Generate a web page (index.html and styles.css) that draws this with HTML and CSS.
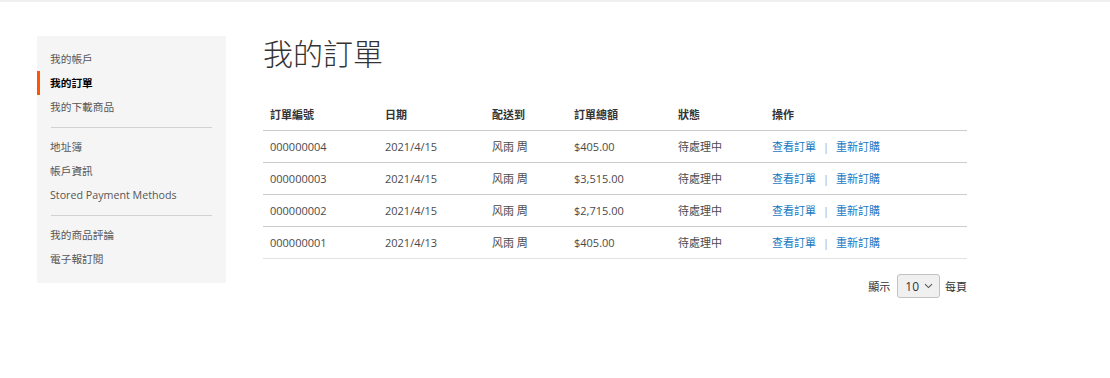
FILE: index.html
```html
<!DOCTYPE html>
<html>
<head>
  <meta charset="UTF-8">
  <title>我的訂單</title>
  <link rel="stylesheet" href="styles.css">
</head>
<body>
  <div class="top-bar"></div>
  <div class="page">
    <div class="sidebar">
      <ul class="nav">
        <li><a href="#">我的帳戶</a></li>
        <li class="current"><strong>我的訂單</strong></li>
        <li><a href="#">我的下載商品</a></li>
        <li class="delim"></li>
        <li><a href="#">地址簿</a></li>
        <li><a href="#">帳戶資訊</a></li>
        <li><a href="#">Stored Payment Methods</a></li>
        <li class="delim"></li>
        <li><a href="#">我的商品評論</a></li>
        <li><a href="#">電子報訂閱</a></li>
      </ul>
    </div>

    <div class="main">
      <h1 class="page-title">我的訂單</h1>
      <table class="orders">
        <thead>
          <tr>
            <th class="col-id">訂單編號</th>
            <th class="col-date">日期</th>
            <th class="col-ship">配送到</th>
            <th class="col-total">訂單總額</th>
            <th class="col-status">狀態</th>
            <th class="col-actions">操作</th>
          </tr>
        </thead>
        <tbody>
          <tr>
            <td>000000004</td><td>2021/4/15</td><td>风雨 周</td><td>$405.00</td><td>待處理中</td>
            <td><a href="#">查看訂單</a><span class="sep">|</span><a href="#">重新訂購</a></td>
          </tr>
          <tr>
            <td>000000003</td><td>2021/4/15</td><td>风雨 周</td><td>$3,515.00</td><td>待處理中</td>
            <td><a href="#">查看訂單</a><span class="sep">|</span><a href="#">重新訂購</a></td>
          </tr>
          <tr>
            <td>000000002</td><td>2021/4/15</td><td>风雨 周</td><td>$2,715.00</td><td>待處理中</td>
            <td><a href="#">查看訂單</a><span class="sep">|</span><a href="#">重新訂購</a></td>
          </tr>
          <tr>
            <td>000000001</td><td>2021/4/13</td><td>风雨 周</td><td>$405.00</td><td>待處理中</td>
            <td><a href="#">查看訂單</a><span class="sep">|</span><a href="#">重新訂購</a></td>
          </tr>
        </tbody>
      </table>

      <div class="pager">
        <span class="pager-label">顯示</span>
        <div class="limiter">
          10
          <svg width="9" height="6" viewBox="0 0 9 6"><path d="M1 1.2 L4.5 4.6 L8 1.2" fill="none" stroke="#555" stroke-width="1.1"/></svg>
        </div>
        <span>每頁</span>
      </div>
    </div>
  </div>
</body>
</html>
```

FILE: styles.css
```css
body { margin: 0; font-family: "Open Sans", "Noto Sans CJK TC", sans-serif; font-size: 11px; color: #333; background: #fff; }
a { color: #1979c3; text-decoration: none; }
.top-bar { height: 2px; background: #f0f0f0; }
.page { display: flex; align-items: flex-start; padding: 34px 0 0 37px; gap: 37px; }

.sidebar { width: 189px; background: #f5f5f5; padding: 11px 0 12px; }
.nav { list-style: none; margin: 0; padding: 0; }
.nav li { border-left: 3px solid transparent; padding-left: 10px; height: 24px; line-height: 24px; font-size: 10.7px; }
.nav li a { color: #575757; }
.nav li.current { border-left-color: #ff5501; }
.nav li.current strong { color: #000; font-weight: 700; }
.nav li.delim { height: 1px; border-left: none; padding: 0; margin: 8px 14px 7px 14px; background: #d1d1d1; }

.main { width: 704px; }
.page-title { margin: 0; font-size: 30px; font-weight: 300; line-height: 36px; color: #333; }

.orders { width: 100%; border-collapse: collapse; margin-top: 26px; }
.orders th { text-align: left; font-weight: 700; color: #333; height: 32px; padding: 0 7px; border-bottom: 1px solid #ccc; vertical-align: middle; }
.orders td { height: 30px; padding: 0 7px 1px; border-bottom: 1px solid #ccc; vertical-align: middle; color: #4a4a4a; }
.orders tbody tr:last-child td { border-bottom-color: #e3e3e3; }
.col-id { width: 101px; }
.col-date { width: 93px; }
.col-ship { width: 68px; }
.col-total { width: 90px; }
.col-status { width: 80px; }
.sep { color: #a6a6a6; margin: 0 7px; }

.pager { display: flex; justify-content: flex-end; align-items: center; margin-top: 15px; color: #333; }
.pager-label { margin-right: 7px; }
.limiter { display: flex; align-items: center; gap: 5px; height: 22px; margin-right: 5px; padding: 0 6px 0 7px; background: #f0f0f0; border: 1px solid #c2c2c2; border-radius: 3px; font-size: 12px; }
```
